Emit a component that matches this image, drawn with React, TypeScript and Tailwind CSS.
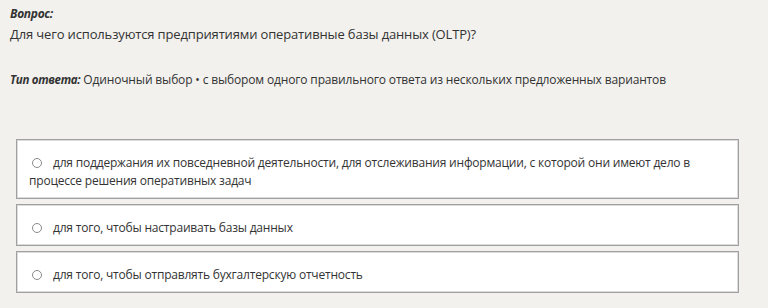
const options = [
  'для поддержания их повседневной деятельности, для отслеживания информации, с которой они имеют дело в процессе решения оперативных задач',
  'для того, чтобы настраивать базы данных',
  'для того, чтобы отправлять бухгалтерскую отчетность',
];

const App: React.FC = () => {
  return (
    <div className="h-[308px] w-[768px] bg-[#f2f1ee] text-[#333] font-['Open_Sans',sans-serif] overflow-hidden">
      <div className="pl-[10px] pt-[6px]">
        <p className="text-[12px] font-bold italic leading-[16px] tracking-[-0.3px]">Вопрос:</p>
        <p className="text-[13px] leading-[20px] mt-[2px] tracking-[-0.15px]">
          Для чего используются предприятиями оперативные базы данных (OLTP)?
        </p>
        <p className="text-[12px] leading-[18px] mt-[27px] tracking-[-0.15px]">
          <span className="font-bold italic text-[11.5px] tracking-[-0.3px]">Тип ответа:</span>{' '}
          Одиночный выбор • с выбором одного правильного ответа из нескольких предложенных вариантов
        </p>
      </div>
      <div className="mt-[50px] ml-[16px] w-[723px] flex flex-col gap-[5px]">
        {options.map((text) => (
          <label
            key={text}
            className="block bg-white border border-[#a0a0a0] shadow-[inset_0_0_0_1px_#dcdcdc] pl-[12px] pr-[30px] pt-[14px] pb-[8px] text-[12px] leading-[18px] tracking-[-0.2px]"
          >
            <span className="inline-block align-[-1px] w-[10px] h-[10px] rounded-full border border-[#8a8a8a] bg-white ml-[3px] mr-[11px]" />
            {text}
          </label>
        ))}
      </div>
    </div>
  );
};

export default App;
